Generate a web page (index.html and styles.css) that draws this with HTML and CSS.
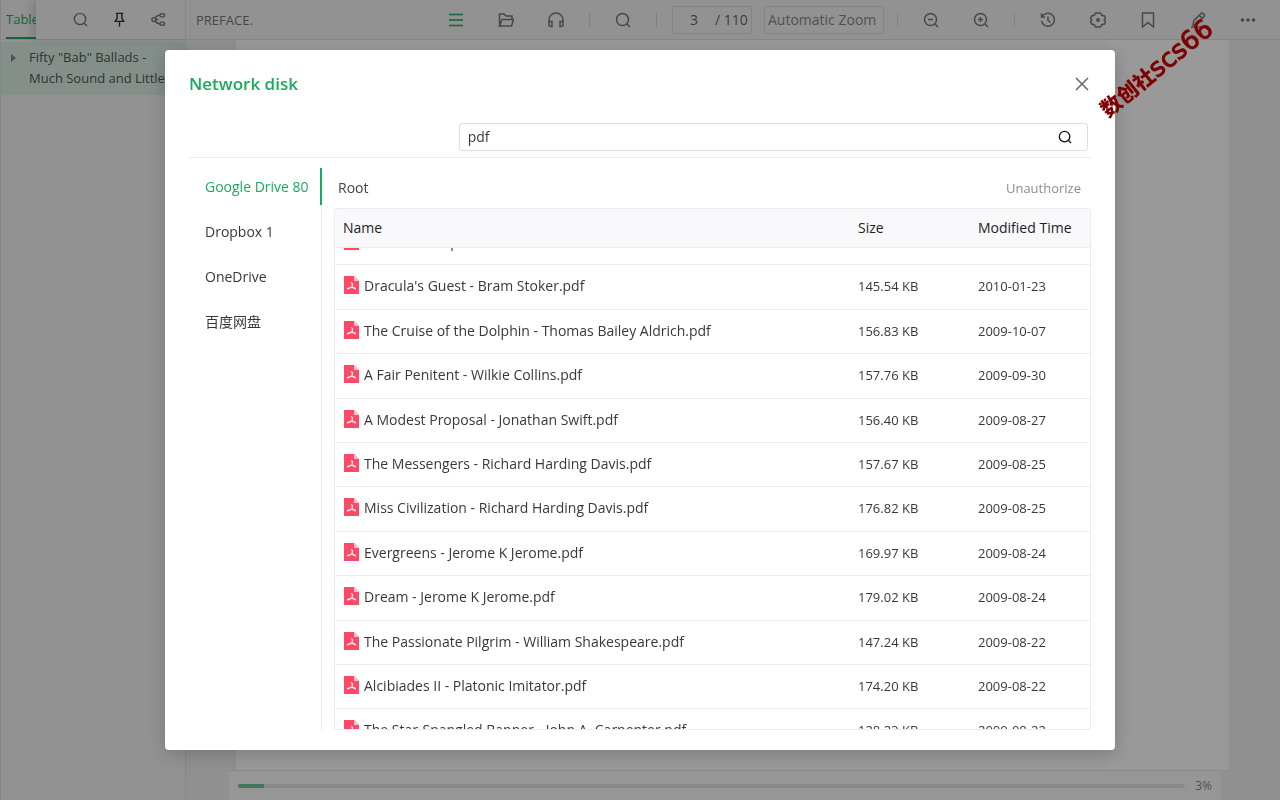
FILE: index.html
```html
<!DOCTYPE html>
<html lang="en">
<head>
<meta charset="utf-8">
<meta name="viewport" content="width=device-width, initial-scale=1">
<title>Network disk</title>
<link rel="stylesheet" href="styles.css">
</head>
<body>
<svg class="sprite" aria-hidden="true">
  <symbol id="i-search" viewBox="0 0 16 16"><circle cx="7.5" cy="7.5" r="6"/><path d="M12 12l3 3"/></symbol>
  <symbol id="i-pdf" viewBox="0 0 15 18"><path fill="#ff4766" stroke="none" d="M0 0h10l5 5v13H0z"/><path fill="#ffc4cd" stroke="none" d="M10 0l5 5h-5z"/><path fill="none" stroke="#ffe4e8" stroke-width="1.4" d="M7 6.500l1.500 1-.5 3.500-5 2M8 11l4 2"/></symbol>
</svg>
<div class="app">
  <aside class="side">
    <div class="side-bar">
      <button class="tab">Table</button>
      <div class="side-tools">
        <button class="tool" aria-label="Search"><svg><use href="#i-search"/></svg></button>
        <button class="tool pin" aria-label="Pin"><svg viewBox="0 0 16 16"><path d="M4 1.500h8M5.500 2v4.500L3.500 10h9L10.500 6.500V2M8 10v5.500"/></svg></button>
        <button class="tool" aria-label="Share"><svg viewBox="0 0 16 16"><circle cx="3" cy="8" r="2"/><rect x="9.500" y="1.800" width="5" height="3.400" rx="1.700"/><rect x="9.500" y="10.800" width="5" height="3.400" rx="1.700"/><path d="M4.500 6.500C5.500 4.500 7 3.500 9.500 3.500M4.500 9.500c1 2 2.500 3 5 3M5 8h3"/></svg></button>
      </div>
    </div>
    <div class="toc"><span class="caret"></span><span>Fifty "Bab" Ballads -<br>Much Sound and Little</span></div>
  </aside>
  <header class="bar">
    <span class="chapter">PREFACE.</span>
    <button class="tool green" aria-label="Contents"><svg viewBox="0 0 16 16"><path d="M1 2.500h14M1 8h14M1 13.500h14"/></svg></button>
    <button class="tool" aria-label="Open"><svg viewBox="0 0 16 16"><path d="M1.500 14V2h4.500l2 2h6V7M1.500 14L4 7.500h11.500L13.500 14z"/></svg></button>
    <button class="tool" aria-label="Listen"><svg viewBox="0 0 16 16"><path d="M1 12V8a7 7 0 0 1 14 0v4M1 9.500h3v5H2.500A1.500 1.500 0 0 1 1 13zM15 9.500h-3v5h1.500A1.500 1.500 0 0 0 15 13z"/></svg></button>
    <span class="sep"></span>
    <button class="tool" aria-label="Find"><svg><use href="#i-search"/></svg></button>
    <span class="sep"></span>
    <label class="page-box"><input type="text" value="3" aria-label="Page"><span>/ 110</span></label>
    <select class="zoom" aria-label="Zoom"><option>Automatic Zoom</option></select>
    <span class="sep"></span>
    <button class="tool" aria-label="Zoom out"><svg viewBox="0 0 16 16"><circle cx="7.500" cy="7.500" r="6"/><path d="M12 12l3 3M5 7.500h5"/></svg></button>
    <button class="tool" aria-label="Zoom in"><svg viewBox="0 0 16 16"><circle cx="7.500" cy="7.500" r="6"/><path d="M12 12l3 3M5 7.500h5M7.500 5v5"/></svg></button>
    <span class="sep"></span>
    <button class="tool" aria-label="History"><svg viewBox="0 0 16 16"><path d="M1.500 1.500V5H5M2 5a6.500 6.500 0 1 1-.5 4M8 4.500V8.500l2.500 2"/></svg></button>
    <button class="tool" aria-label="Settings"><svg viewBox="0 0 16 16"><path d="M5.500 1h5l1.300 2.300 2.700.7 1 2.500L14.200 8l1.300 1.500-1 2.500-2.700.7L10.500 15h-5l-1.300-2.300L1.500 12l-1-2.500L1.800 8 .5 6.500l1-2.500 2.700-.7z"/><circle cx="8" cy="8" r="1.200"/></svg></button>
    <button class="tool" aria-label="Bookmark"><svg viewBox="0 0 16 16"><path d="M2.500 1h11v14L8 10.500 2.500 15z"/></svg></button>
    <button class="tool" aria-label="Annotate"><svg viewBox="0 0 16 16"><path d="M11 1.500a1.500 1.500 0 0 1 2 0l1 1a1.500 1.500 0 0 1 0 2L7 12l-4 1 1-4.500zM9.500 3.500l3 3M1 15.500c4-2 7 1 13-1.500"/></svg></button>
    <button class="tool dots" aria-label="More"><svg viewBox="0 0 16 16"><circle cx="2.500" cy="8" r="1.800"/><circle cx="8" cy="8" r="1.800"/><circle cx="13.500" cy="8" r="1.800"/></svg></button>
  </header>
  <main class="reader">
    <div class="sheet"></div>
    <footer class="progress">
      <div class="track" role="progressbar" aria-valuenow="3" aria-label="Reading progress"><div class="fill" style="width:2.700%"></div></div>
      <span>3%</span>
    </footer>
  </main>
</div>

<div class="overlay">
  <section class="modal" role="dialog" aria-label="Network disk">
    <div class="modal-head">
      <h1>Network disk</h1>
      <button class="close" aria-label="Close"><svg viewBox="0 0 12 12"><path d="M0 0l12 12M12 0L0 12"/></svg></button>
    </div>
    <div class="search-row">
      <div class="search">
        <input type="text" value="pdf" aria-label="Search files">
        <button aria-label="Search"><svg><use href="#i-search"/></svg></button>
      </div>
    </div>
    <div class="modal-body">
      <nav class="drives">
        <button class="active">Google Drive 80</button>
        <button>Dropbox 1</button>
        <button>OneDrive</button>
        <button>百度网盘</button>
      </nav>
      <div class="files">
        <div class="crumbs"><a href="#">Root</a><button>Unauthorize</button></div>
        <div class="scroller" id="scroller">
          <table>
            <colgroup><col><col class="c-size"><col class="c-time"></colgroup>
            <thead><tr><th>Name</th><th>Size</th><th>Modified Time</th></tr></thead>
            <tbody>
              <tr><td><svg><use href="#i-pdf"/></svg>The Sea Fairi.pdf</td><td></td><td></td></tr>
              <tr><td><svg><use href="#i-pdf"/></svg>Dracula's Guest - Bram Stoker.pdf</td><td>145.54 KB</td><td>2010-01-23</td></tr>
              <tr><td><svg><use href="#i-pdf"/></svg>The Cruise of the Dolphin - Thomas Bailey Aldrich.pdf</td><td>156.83 KB</td><td>2009-10-07</td></tr>
              <tr><td><svg><use href="#i-pdf"/></svg>A Fair Penitent - Wilkie Collins.pdf</td><td>157.76 KB</td><td>2009-09-30</td></tr>
              <tr><td><svg><use href="#i-pdf"/></svg>A Modest Proposal - Jonathan Swift.pdf</td><td>156.40 KB</td><td>2009-08-27</td></tr>
              <tr><td><svg><use href="#i-pdf"/></svg>The Messengers - Richard Harding Davis.pdf</td><td>157.67 KB</td><td>2009-08-25</td></tr>
              <tr><td><svg><use href="#i-pdf"/></svg>Miss Civilization - Richard Harding Davis.pdf</td><td>176.82 KB</td><td>2009-08-25</td></tr>
              <tr><td><svg><use href="#i-pdf"/></svg>Evergreens - Jerome K Jerome.pdf</td><td>169.97 KB</td><td>2009-08-24</td></tr>
              <tr><td><svg><use href="#i-pdf"/></svg>Dream - Jerome K Jerome.pdf</td><td>179.02 KB</td><td>2009-08-24</td></tr>
              <tr><td><svg><use href="#i-pdf"/></svg>The Passionate Pilgrim - William Shakespeare.pdf</td><td>147.24 KB</td><td>2009-08-22</td></tr>
              <tr><td><svg><use href="#i-pdf"/></svg>Alcibiades II - Platonic Imitator.pdf</td><td>174.20 KB</td><td>2009-08-22</td></tr>
              <tr><td><svg><use href="#i-pdf"/></svg>The Star-Spangled Banner - John A. Carpenter.pdf</td><td>128.23 KB</td><td>2009-08-22</td></tr>
            </tbody>
          </table>
        </div>
      </div>
    </div>
  </section>
</div>
<div class="watermark">数创社<span>scs66</span></div>
<script src="app.js"></script>
</body>
</html>
```
FILE: styles.css
```css
* { box-sizing: border-box; }
body {
  margin: 0;
  color: #383838;
  font: 14px/20px "Open Sans", "Noto Sans CJK SC", sans-serif;
}
button, input, select {
  margin: 0;
  padding: 0;
  border: 0;
  background: none;
  color: inherit;
  font: inherit;
}
svg { width: 16px; height: 16px; fill: none; stroke: currentColor; stroke-width: 1.5; }
.sprite { position: absolute; width: 0; height: 0; }

.app {
  display: grid;
  grid-template: 40px 1fr / 186px 1fr;
  height: 100vh;
  background: #f0f0f0;
}
.side {
  grid-row: 1 / 3;
  overflow: hidden;
  border: solid #e0e0e0;
  border-width: 0 1px;
  background: #f4f4f4;
}
.side-bar { display: flex; height: 40px; border-bottom: 1px solid #e0e0e0; }
.tab {
  flex: none;
  width: 30px;
  margin-left: 5px;
  overflow: hidden;
  border-bottom: 2px solid #19ab5f;
  color: #19ab5f;
  font-size: 13px;
  text-align: left;
  white-space: nowrap;
}
.side-tools {
  display: flex;
  flex: 1;
  justify-content: flex-end;
  padding-right: 7px;
  box-shadow: -4px 0 8px rgba(0, 0, 0, .15);
}
.side-tools .tool { width: 39px; }
.toc {
  display: flex;
  gap: 13px;
  margin-top: 2px;
  padding: 5px 0 6px 10px;
  background: #dceee4;
  color: #555;
  font-size: 13px;
  line-height: 21px;
  white-space: nowrap;
}
.caret {
  margin-top: 7px;
  height: 8px;
  border: 4px solid transparent;
  border-left: 5px solid #888;
  border-right: 0;
}
.bar {
  display: flex;
  align-items: center;
  padding: 0 7px 0 10px;
  border-bottom: 1px solid #e0e0e0;
  background: #f4f4f4;
  color: #666;
}
.chapter { margin-right: auto; color: #777; font-size: 13px; }
.tool {
  display: flex;
  align-items: center;
  justify-content: center;
  width: 50px;
  height: 39px;
  color: #777;
}
.side-tools svg { width: 15px; height: 15px; }
.tool.pin { color: #333; }
.tool.green { color: #19ab5f; }
.dots svg { fill: currentColor; stroke: none; }
.sep { width: 1px; height: 16px; margin: 0 8px; background: #d8d8d8; }
.page-box {
  display: flex;
  align-items: center;
  width: 80px;
  height: 28px;
  margin: 0 12px 0 7px;
  border: 1px solid #dcdcdc;
  border-radius: 3px;
}
.page-box input { width: 42px; text-align: center; }
.zoom {
  width: 120px;
  height: 28px;
  margin-right: 5px;
  padding: 0 3px;
  border: 1px solid #dcdcdc;
  border-radius: 3px;
  color: #888;
  appearance: none;
}
.reader {
  display: flex;
  flex-direction: column;
  padding: 0 51px 0 50px;
}
.sheet { flex: 1; background: #fff; }
.progress {
  display: flex;
  align-items: center;
  gap: 10px;
  height: 30px;
  margin: 0 8px 0 -7px;
  padding: 0 9px;
  border-top: 1px solid #e4e4e4;
  background: #fbfbfb;
  color: #888;
  font-size: 12px;
}
.track { flex: 1; height: 4px; overflow: hidden; border-radius: 2px; background: #e4e4e4; }
.fill { height: 100%; background: #74c79a; }

.overlay {
  position: fixed;
  inset: 0;
  display: flex;
  justify-content: center;
  padding: 50px 24px;
  background: rgba(0, 0, 0, .4);
}
.modal {
  display: flex;
  flex-direction: column;
  width: 100%;
  max-width: 950px;
  padding: 20px 24px;
  border-radius: 4px;
  background: #fff;
  box-shadow: 0 4px 20px rgba(0, 0, 0, .2);
}
.modal-head {
  display: flex;
  align-items: center;
  justify-content: space-between;
  height: 27px;
  padding-right: 3px;
}
h1 { margin: 0; color: #19ab5f; font-size: 17px; font-weight: 600; }
.close { display: flex; color: #666; }
.close svg { width: 12px; height: 12px; overflow: visible; }
.search-row {
  display: flex;
  justify-content: flex-end;
  margin-top: 26px;
  padding: 0 3px 6px 0;
  border-bottom: 1px solid #ececf0;
}
.search {
  display: flex;
  align-items: center;
  width: 70%;
  height: 28px;
  padding: 0 15px 0 8px;
  border: 1px solid #dcdee2;
  border-radius: 3px;
}
.search input { flex: 1; min-width: 0; outline: 0; }
.search button { display: flex; color: #111; }
.search svg { width: 14px; height: 14px; }
.modal-body { display: flex; flex: 1; min-height: 0; padding-top: 10px; }
.drives {
  display: flex;
  flex-direction: column;
  gap: 8px;
  flex: none;
  width: 133px;
  border-right: 1px solid #ececf0;
}
.drives button {
  height: 37px;
  margin-right: -1px;
  padding-left: 16px;
  border-right: 2px solid transparent;
  text-align: left;
  white-space: nowrap;
}
.drives .active { border-color: #19ab5f; color: #19ab5f; }
.files { display: flex; flex: 1; flex-direction: column; min-width: 0; padding-left: 12px; }
.crumbs {
  display: flex;
  justify-content: space-between;
  height: 40px;
  padding: 10px 10px 10px 4px;
}
.crumbs a { color: #444; text-decoration: none; }
.crumbs button { color: #8c8c8c; font-size: 13px; }
.scroller {
  flex: 1;
  min-height: 0;
  overflow: hidden;
  border: 1px solid #ececf0;
  border-radius: 3px;
}
table { width: 100%; border-spacing: 0; table-layout: fixed; }
.c-size, .c-time { width: 120px; }
th {
  position: sticky;
  top: 0;
  height: 39px;
  padding: 0 8px;
  border-bottom: 1px solid #ececf4;
  background: #f9f9fc;
  color: #222;
  font-weight: 400;
  text-align: left;
}
td {
  height: 44px;
  padding: 0 8px 2px;
  border-bottom: 1px solid #ececf4;
  font-size: 13px;
  white-space: nowrap;
}
td:first-child { font-size: 14px; }
tr:nth-child(5n+2) td, tr:nth-child(5n+4) td { height: 45px; }
td svg { width: 15px; height: 18px; margin: 0 5px 0 1px; vertical-align: -3px; }

.watermark {
  position: fixed;
  top: 54px;
  left: 1087px;
  color: #800000;
  font: 900 21px/28px "Noto Sans CJK SC", sans-serif;
  white-space: nowrap;
  transform: rotate(-39deg);
}
.watermark span { font: 26px/28px "DejaVu Sans", sans-serif; -webkit-text-stroke: 1px #800000; }
```
FILE: app.js
```js
document.getElementById("scroller").scrollTop = 27;
```
